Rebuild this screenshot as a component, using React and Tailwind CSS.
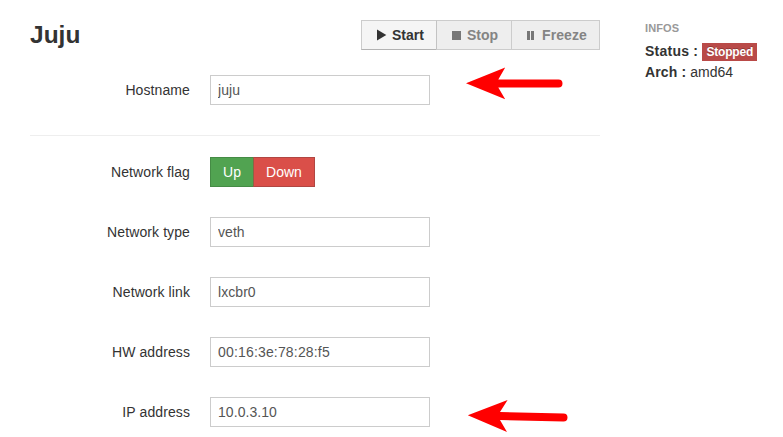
const fields = [
  { label: 'Network type', value: 'veth' },
  { label: 'Network link', value: 'lxcbr0' },
  { label: 'HW address', value: '00:16:3e:78:28:f5', wide: true },
  { label: 'IP address', value: '10.0.3.10' },
];

function Row({ label, children }) {
  return (
    <div className="flex h-[30px] shrink-0 items-center">
      <label className="mr-5 w-40 text-right tracking-[0.1px]">{label}</label>
      {children}
    </div>
  );
}

function TextInput({ value, wide }) {
  return (
    <input
      type="text"
      defaultValue={value}
      className={`h-[30px] w-[220px] border border-[#ccc] bg-white px-[7px] text-[#555] outline-none ${wide ? 'tracking-[0.17px]' : 'tracking-[0.06px]'}`}
    />
  );
}

function ActionButtons() {
  return (
    <div className="flex h-[30px] font-bold">
      <button className="flex w-[76px] items-center border border-[#ccc] border-b-[#b3b3b3] bg-[#f5f5f5] pl-[14px]">
        <svg className="mr-[5px] shrink-0" width="11" height="12" viewBox="0 0 11 12" fill="#333">
          <path d="M1 0.5 10.3 6 1 11.5Z" />
        </svg>
        Start
      </button>
      <button className="-ml-px flex w-[76px] items-center border border-[#ccc] border-l-[#c3c3c3] bg-[#eee] pl-[15px] text-[#848484]">
        <span className="mr-[6px] size-[9px] shrink-0 bg-[#777]" />
        Stop
      </button>
      <button className="-ml-px flex w-[89px] items-center border border-[#ccc] bg-[#eee] pl-[15px] text-[#848484]">
        <span className="mr-2 flex h-[9px] w-[7px] shrink-0 justify-between">
          <span className="w-[3px] bg-[#777]" />
          <span className="w-[3px] bg-[#777]" />
        </span>
        <span className="tracking-[0.1px]">Freeze</span>
      </button>
    </div>
  );
}

function Infos() {
  return (
    <aside className="ml-[45px] w-[130px] pt-[18px]">
      <h4 className="h-5 text-[11px] leading-5 font-bold tracking-[0.1px] text-[#999] [text-shadow:0_1px_0_rgba(255,255,255,.5)]">
        INFOS
      </h4>
      <div className="flex h-[26px] items-center">
        <b className="mr-1 tracking-[0.24px]">Status :</b>
        <span className="mt-0.5 flex h-[18px] w-[55px] items-center justify-center bg-[#b94a48] text-[12px] leading-[14px] font-bold tracking-[-0.2px] text-white [text-shadow:0_-1px_0_rgba(0,0,0,.25)]">
          Stopped
        </span>
      </div>
      <div className="-mt-[2px] h-5 leading-5">
        <b className="tracking-[0.15px]">Arch :</b> amd64
      </div>
    </aside>
  );
}

export default function App() {
  return (
    <div className="relative flex h-[437px] w-[783px] overflow-hidden bg-white pl-[30px] font-['Liberation_Sans',Arial,sans-serif] text-[14px] leading-5 text-[#333]">
      <main className="flex w-[570px] flex-col pt-5">
        <header className="flex h-[30px] shrink-0 items-center justify-between">
          <h3 className="text-[24.5px] leading-[30px] font-bold">Juju</h3>
          <ActionButtons />
        </header>
        <form className="mt-[25px] flex flex-col gap-[30px]">
          <Row label="Hostname">
            <TextInput value="juju" />
          </Row>
          <hr className="-mb-[9px] border-[#eee]" />
          <Row label="Network flag">
            <div className="flex h-[30px] text-white [text-shadow:0_-1px_0_rgba(0,0,0,.25)]">
              <button type="button" className="w-11 border border-[#458b45] bg-[#51a351]">Up</button>
              <button type="button" className="-ml-px w-[62px] border border-[#b14642] border-l-[#8a6544] bg-[#da4f49]">Down</button>
            </div>
          </Row>
          {fields.map((field) => (
            <Row key={field.label} label={field.label}>
              <TextInput value={field.value} wide={field.wide} />
            </Row>
          ))}
        </form>
      </main>
      <Infos />
      <svg className="absolute top-[67px] left-[465px]" width="100" height="34" viewBox="0 0 100 34" fill="red">
        <path d="M1 16.2 40.2 0.6 33.3 12.4H93.5a4 4 0 0 1 0 8H33.3L40.2 32.3Z" />
      </svg>
      <svg className="absolute top-[399px] left-[467px]" width="104" height="34" viewBox="0 0 104 34" fill="red">
        <path d="M0.8 16.2 40.6 1.1 33 13.1 96.5 14.5a4 4 0 0 1 0 8L33 21 40 33.1Z" />
      </svg>
    </div>
  );
}
